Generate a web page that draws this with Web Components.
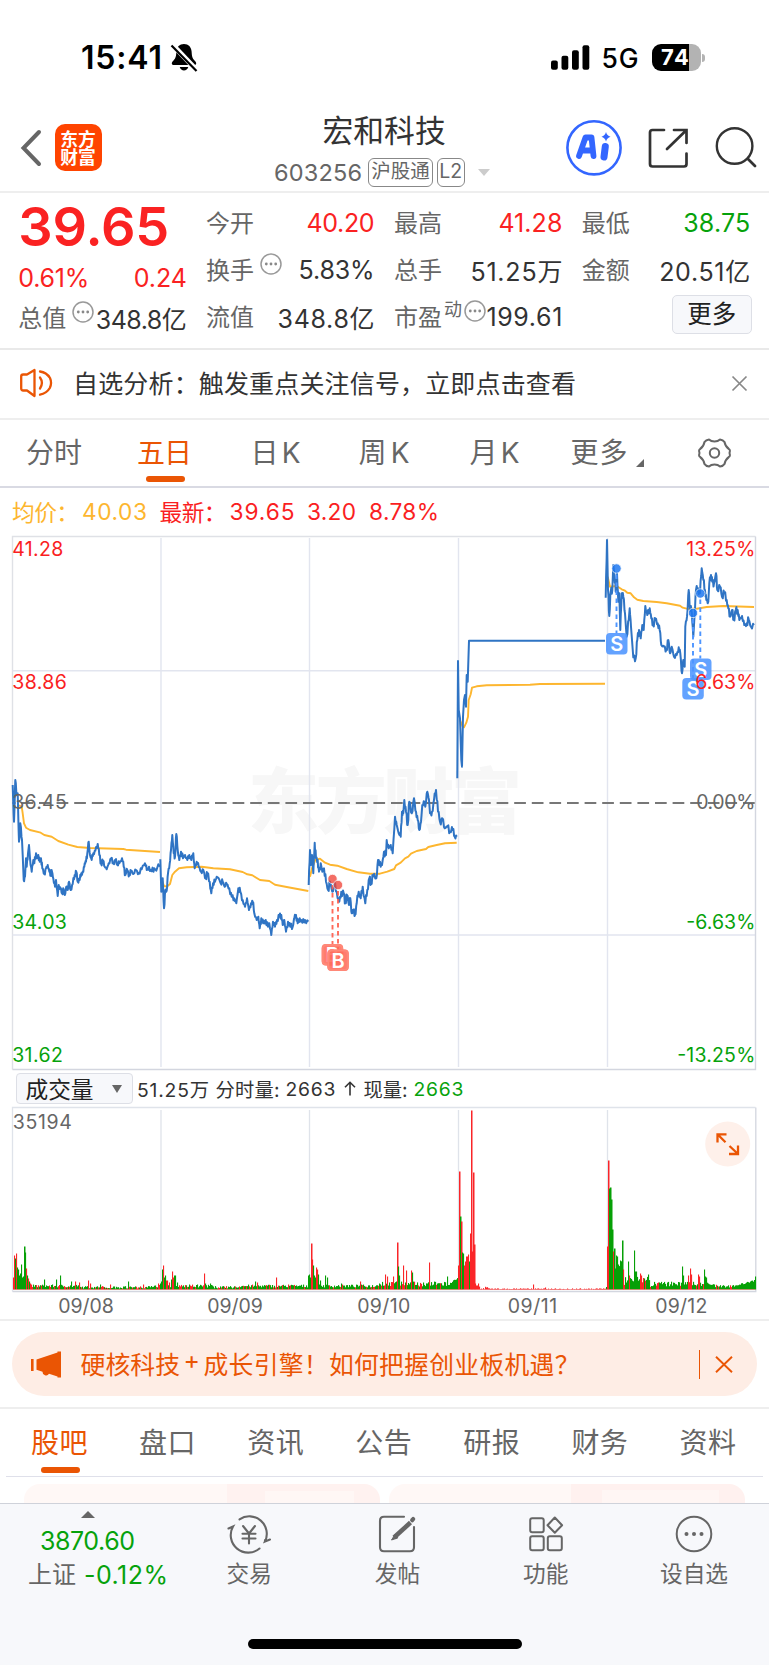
<!DOCTYPE html>
<html lang="zh-CN">
<head>
<meta charset="utf-8">
<title>宏和科技 603256</title>
<style>
html,body{margin:0;padding:0;background:#fff}
body{width:769px;font-family:Inter,"Noto Sans CJK SC",sans-serif;color:#333;overflow-x:hidden}
</style>
</head>
<body>
<stock-app></stock-app>
<script>
const make = (name, css, html) => {
  const t = document.createElement('template');
  t.innerHTML = `<style>:host{display:block;box-sizing:border-box}*{box-sizing:border-box}svg{display:block;overflow:visible}${css}</style>${html}`;
  customElements.define(name, class extends HTMLElement {
    connectedCallback() {
      if (this.shadowRoot) return;
      this.attachShadow({ mode: 'open' }).appendChild(t.content.cloneNode(true));
    }
  });
};

/* ---------- app shell ---------- */
make('stock-app', `:host{width:769px;height:1665px;overflow:hidden;background:#fff}`, `
<status-bar></status-bar>
<nav-header></nav-header>
<quote-panel></quote-panel>
<notice-bar></notice-bar>
<period-tabs></period-tabs>
<chart-legend></chart-legend>
<price-chart></price-chart>
<volume-head></volume-head>
<volume-chart></volume-chart>
<promo-banner></promo-banner>
<section-tabs></section-tabs>
<feed-peek></feed-peek>
<bottom-nav></bottom-nav>`);

make('status-bar', `:host{display:flex;align-items:center;height:103px;padding:12px 64px 0 81px;color:#000}
.l,.r{display:flex;align-items:center}.r{margin-left:auto}
.time{font-size:32px;font-weight:600}
.bell{margin-left:8px}.g{font-size:26.5px;font-weight:500;margin:1px 13px 0 12px}
.bat{width:49px;height:27px;border-radius:9px;background:linear-gradient(90deg,#000 37px,#b3b3b3 37px);color:#fff;font-weight:700;font-size:22px;line-height:27px;padding-left:9.5px}
.nub{width:3px;height:8px;border-radius:0 3px 3px 0;background:#b3b3b3;margin-left:1.5px}`, `
<div class="l"><fit-text class="time" w="81">15:41</fit-text>
<svg class="bell" width="28" height="29" viewBox="0 0 28 29"><path d="M14 1c-4.500 0-7.300 3.200-7.600 7.400-.3 4.600-.6 6.600-2.900 9-1.100 1.200-1.700 2-1.700 3.100 0 .9.700 1.500 1.800 1.500h20.800c1.100 0 1.800-.6 1.800-1.500 0-1.100-.6-1.900-1.700-3.100-2.300-2.400-2.600-4.400-2.900-9C21.300 4.200 18.500 1 14 1ZM9.700 24c.7 2.300 2.300 3.500 4.300 3.500s3.600-1.200 4.300-3.500Z"/><path d="M2.300 1.500 27 27.500" stroke="#fff" stroke-width="5"/><path d="M1.500 2.500 26.500 28" stroke="#000" stroke-width="2.200"/></svg></div>
<div class="r"><svg width="39" height="25" viewBox="0 0 39 25"><rect x="0" y="15.500" width="6.800" height="9.300" rx="2"/><rect x="10.500" y="10.800" width="6.800" height="14" rx="2"/><rect x="21" y="5.300" width="6.800" height="19.500" rx="2"/><rect x="31.500" y=".3" width="6.800" height="24.500" rx="2"/></svg>
<fit-text class="g" w="37">5G</fit-text><div class="bat"><fit-text w="28">74</fit-text></div><div class="nub"></div></div>`);

make('nav-header', `:host{display:grid;grid-template-columns:240px 1fr 240px;height:90px;border-bottom:2px solid #eee}
.l{display:flex;align-items:center;padding-left:20.500px;height:89px}
.logo{margin-left:14px;width:47px;height:47px;border-radius:10px;background:#ff4400;color:#fff;font:700 17.800px/18.500px "Noto Sans CJK SC",sans-serif;text-align:center;padding-top:4.500px}
.c{display:flex;flex-direction:column}
h1{font-weight:400;font-size:30.800px;line-height:36px;margin:9.500px 0 0 82.500px;color:#333}
.sub{display:flex;align-items:center;height:30px;margin-top:9px;padding-left:34px;color:#666;font-size:23.500px}
.tag{height:29px;border:1.500px solid #888;border-radius:6px;line-height:25.500px;font-size:19.500px;display:flex;justify-content:center}
.tri{border:6.500px solid transparent;border-top:7px solid #ccc;border-bottom:0;margin-left:13px}
.r{display:flex;align-items:center;height:90px}`, `
<div class="l"><svg width="20" height="36" viewBox="0 0 20 36"><path d="M18 2 2.500 18 18 34" fill="none" stroke="#666" stroke-width="4" stroke-linecap="round"/></svg><div class="logo">东方<br>财富</div></div>
<div class="c"><h1>宏和科技</h1><div class="sub"><fit-text w="88">603256</fit-text><span class="tag" style="width:65px;margin-left:6px">沪股通</span><span class="tag" style="width:27.500px;margin-left:4px">L2</span><span class="tri"></span></div></div>
<div class="r"><svg width="240" height="90" viewBox="529 103 240 90" fill="none">
<circle cx="594" cy="147.800" r="26.600" stroke="#36f" stroke-width="2.600"/>
<path d="M579 156 585.500 137.500h6l2 18.500M582.300 150.500h10.500" stroke="#36f" stroke-width="5.800" stroke-linejoin="round" stroke-linecap="round"/>
<path d="M605.300 146.500 604 157" stroke="#36f" stroke-width="7" stroke-linecap="round"/><path d="M606 132q1 3.800 4.500 4.800-3.500 1-4.500 4.800-1-3.800-4.500-4.800 3.500-1 4.500-4.800Z" fill="#36f"/>
<path d="M664 130H652.500q-2.500 0-2.500 2.500V164q0 2.500 2.500 2.500H684q2.500 0 2.500-2.500V153.500M674 130h12.500v13M686 130.500 667 149" stroke="#333" stroke-width="2.700" stroke-linecap="round"/>
<circle cx="734.600" cy="146" r="17.800" stroke="#333" stroke-width="2.400"/><path d="m748 159 7 7" stroke="#333" stroke-width="2.800" stroke-linecap="round"/></svg></div>`);

/* ---------- quote ---------- */
make('info-dot', `:host{display:inline-block;margin-bottom:9px}`, `<svg width="22" height="22" viewBox="0 0 22 22"><circle cx="11" cy="11" r="10" fill="none" stroke="#999" stroke-width="1.500"/><g fill="#888"><circle cx="6.300" cy="11" r="1.400"/><circle cx="11" cy="11" r="1.400"/><circle cx="15.700" cy="11" r="1.400"/></g></svg>`);
make('quote-cell', `:host{display:flex;align-items:center;justify-content:space-between;height:47px;font-size:25px;white-space:nowrap}.k{display:flex;align-items:center;font-size:24px;color:#666;padding-bottom:2px}`, `<div class="k"><slot name="k"></slot></div><slot></slot>`);
make('quote-panel', `:host{display:grid;grid-template-columns:repeat(4,168.500px);column-gap:19.300px;height:157px;padding-left:18.300px;border-bottom:2px solid #e9e9e9}
.up{color:#fa2222}.dn{color:#06a20b}.big{font-size:54px;font-weight:600;height:67px;display:flex;align-items:center}
.o{padding-top:6px}info-dot{margin-left:6px}.sup{font-size:18px;margin:0 0 16px 2px}.sup+info-dot{margin-left:2px}
.n{color:#333}.btn{width:80px;height:39px;border:1.500px solid #dddfe6;background:#f7f8fb;border-radius:5px;margin:2px -1.500px 0 auto;font-size:24.500px;line-height:37px;text-align:center;color:#222}`, `
<div><div class="big up"><fit-text w="151">39.65</fit-text></div>
<quote-cell style="height:35px" class="up"><fit-text class="up" slot="k" w="71" style="font-size:25px;padding-top:2px">0.61%</fit-text><fit-text w="53">0.24</fit-text></quote-cell>
<quote-cell style="height:45px" class="n"><span slot="k">总值</span><info-dot slot="k"></info-dot><fit-text w="91">348.8亿</fit-text></quote-cell></div>
<div class="o"><quote-cell><span slot="k">今开</span><fit-text class="up" w="68">40.20</fit-text></quote-cell>
<quote-cell><span slot="k">换手</span><info-dot slot="k"></info-dot><fit-text w="76">5.83%</fit-text></quote-cell>
<quote-cell><span slot="k">流值</span><fit-text w="97">348.8亿</fit-text></quote-cell></div>
<div class="o"><quote-cell><span slot="k">最高</span><fit-text class="up" w="64">41.28</fit-text></quote-cell>
<quote-cell><span slot="k">总手</span><fit-text w="92">51.25万</fit-text></quote-cell>
<quote-cell><span slot="k">市盈</span><span slot="k" class="sup">动</span><info-dot slot="k"></info-dot><fit-text w="76">199.61</fit-text></quote-cell></div>
<div class="o"><quote-cell><span slot="k">最低</span><fit-text class="dn" w="67">38.75</fit-text></quote-cell>
<quote-cell><span slot="k">金额</span><fit-text w="91">20.51亿</fit-text></quote-cell><div class="btn">更多</div></div>`);

make('notice-bar', `:host{display:flex;align-items:center;height:70px;padding:0 21px 2px 20px;border-bottom:2px solid #eee;font-size:25px;color:#333}.t{margin:0 0 3px 20px}.x{margin-left:auto}`, `
<svg width="33" height="28" viewBox="0 0 33 28" fill="none" stroke="#ea5504" stroke-width="2.300" stroke-linejoin="round" stroke-linecap="round"><path d="M1.200 7.500q0-2 2-2H7L14.500 1v26L7 21.500H3.200q-2 0-2-2Z"/><path d="M20 8.500q3.800 5.300 0 11M20 2.500q6.500.8 10 6.500 2.200 5-.2 10-3.300 5.500-9.800 6.700"/></svg>
<fit-text class="t" w="503">自选分析：触发重点关注信号，立即点击查看</fit-text>
<svg class="x" width="17" height="17" viewBox="0 0 17 17"><path d="m1.500 1.500 14 14m0-14-14 14" stroke="#888" stroke-width="1.700"/></svg>`);

make('period-tabs', `:host{display:flex;height:68px;border-bottom:2px solid #d9dae3;font-size:28px;line-height:67px;color:#666;padding-left:26px;white-space:nowrap}
.on{color:#ea5504;display:flex;flex-direction:column;height:66px}.on i{width:39px;height:6px;border-radius:3px;background:#ea5504;margin:-11px 0 0 8.500px}
.tri{width:0;height:0;border-left:8px solid transparent;border-bottom:8px solid #666;margin:39px 54px 0 8px}svg{margin-top:17px}`, `
<fit-text w="56" style="margin-right:55px">分时</fit-text><div class="on" style="margin-right:58.500px"><fit-text w="55">五日</fit-text><i></i></div>
<fit-text w="50" style="margin-right:58px">日K</fit-text><fit-text w="51" style="margin-right:60px">周K</fit-text><fit-text w="50" style="margin-right:51px">月K</fit-text><fit-text w="57">更多</fit-text><span class="tri"></span>
<svg width="33" height="32" viewBox="-16.500 -16 33 32" fill="none" stroke="#666" stroke-width="2"><path d="M-5.500-13.500q2 1.900 5.500 1.900t5.500-1.900q3 .3 4.600 2.600.3 3.700 4.400 7Q16-3.500 15 0q1 3.500-.5 3.900-4.100 3.300-4.400 7-1.600 2.300-4.600 2.600-2-1.900-5.500-1.900t-5.500 1.900q-3-.3-4.600-2.600-.3-3.700-4.400-7-1.500-.4-.5-3.900-1-3.500.5-3.900 4.100-3.300 4.400-7 1.600-2.300 4.600-2.600Z" stroke-linejoin="round"/><circle r="4.700"/></svg>`);

make('chart-legend', `:host{display:flex;align-items:center;height:48px;padding:0 0 1px 12px;font-size:22.700px;color:#fa1e22;white-space:nowrap}.a{color:#fdb62f}`, `
<fit-text class="a" w="67">均价：</fit-text><fit-text class="a" w="65" style="margin-left:3px">40.03</fit-text><fit-text w="67" style="margin-left:12.500px">最新：</fit-text><fit-text w="65" style="margin-left:3px">39.65</fit-text><fit-text w="49" style="margin-left:12.500px">3.20</fit-text><fit-text w="70" style="margin-left:13px">8.78%</fit-text>`);

/* ---------- charts ---------- */
let seed = 7;
const rnd = () => (seed = (seed * 16807) % 2147483647) / 2147483647;
/* [originX, originY, jitter, points]; points are in thirds of a pixel from the origin */
const PRICE = [
[0,530,9,"38,765 42,875 46,750 50,795 53,790 57,935 61,880 66,930 68,975 71,1050 75,1040 78,985 80,1010 84,970 87,945 90,985 95,1025 100,990 103,1000 108,970 111,985 115,975 119,995 123,985 127,1015 133,1032 138,1015 143,1005 148,1025 152,1035 156,1025 160,1045 165,1070 168,1050 173,1098 176,1065 182,1075 186,1090 191,1080 194,1095 199,1070 203,1080 207,1055 212,1080 218,1062 224,1035 229,1025 233,1055 239,1050 244,1030 250,1025 254,1000 258,995 262,970 266,935 270,975 275,990 280,970 286,962 293,942 298,975 303,1000 309,995 314,1010 320,1018 326,1000 333,985 340,1000 346,990 352,1005 358,1000 366,985 371,1010 376,1035 382,1020 388,1035 393,1022 400,1032 408,1020 416,1028 425,1018 435,1000 440,1020 447,1010 455,1024 463,1015 480,1010"],
[0,530,9,"481,988 484,1085 488,1045 492,1135 496,1080 500,1082 504,1030 509,1000 513,960 517,915 521,970 525,980 529,912 533,960 538,990 543,965 549,985 555,975 562,990 568,975 574,990 580,970 584,1015 590,995 596,1010 603,1025 610,1020 617,1045 622,1030 629,1055 634,1090 639,1060 645,1055 650,1040 656,1045 662,1060 668,1055 674,1070 680,1062 688,1075 695,1100 703,1105 709,1120 715,1075 721,1085 728,1110 735,1130 741,1105 747,1140 753,1120 758,1115 763,1150 770,1170 775,1160 779,1195 784,1165 790,1180 797,1170 804,1190 808,1180 814,1215 819,1175 825,1190 831,1170 838,1160 844,1155 848,1185 853,1170 858,1205 864,1175 871,1190 878,1190 883,1165 888,1155 893,1180 899,1165 907,1178 915,1170 925,1175"],
[300,740,12,"26,435 30,330 33,375 36,345 40,400 44,308 48,355 53,360 57,395 62,370 67,395 72,385 78,425 84,450 90,425 97,455 103,430 110,455 118,485 124,455 131,460 136,490 141,465 147,495 151,475 155,520 160,510 165,525 170,490 176,455 182,475 188,440 196,490 202,450 208,415 213,430 219,410 229,415 234,360 240,365 246,375 252,335 258,345 260,300 266,325 272,315 278,340 285,230 290,255 296,280 302,290 306,215 310,220 313,180 318,215 323,255 328,185 335,220 342,175 348,215 353,240 358,270 363,245 367,195 373,185 376,200 382,155 387,180 390,220 396,215 402,180 408,150 414,215 420,245 427,235 434,265 442,260 450,275 458,270 464,290 470,290"],
[440,530,0,"52,745 54,393 56,540 60,565 64,690 66,710 69,560 72,510 75,495 78,530 80,435 83,455 87,332 495,332"],
[440,530,12,"497,203 501,30 504,180 508,258 512,185 517,180 520,105 523,130 527,185 531,130 535,215 538,190 541,300 545,190 550,200 555,250 558,295 560,320 566,270 569,235 573,290 576,330 580,382 587,385 592,330 597,300 602,325 607,285 611,300 616,228 622,255 629,235 634,265 639,285 646,265 653,280 659,300 664,345 672,350 679,360 685,330 690,370 695,350 702,380 710,375 716,352 721,370 726,430 730,390 734,410 736,290 741,260 746,180 750,235 754,240 758,290 760,320 763,270 768,180 774,175 780,190 785,115 790,150 795,180 799,210 805,215 808,160 813,135 817,155 822,160 828,130 832,180 840,170 846,200 853,190 860,210 865,235 870,260 876,240 881,270 887,240 893,240 898,270 906,258 913,285 920,280 926,268 933,290 942,285"]];
const AVG = [
[0,530,0,"54,825 65,830 68,850 72,880 78,893 90,900 122,908 133,915 155,920 175,933 205,944 232,951 270,954 370,957 378,959 480,966"],
[0,530,0,"484,1045 492,1068 500,1070 510,1062 517,1035 525,1025 537,1015 560,1012 605,1010 640,1015 690,1018 728,1026 742,1033 757,1036 780,1050 808,1053 825,1064 860,1071 925,1083"],
[300,740,0,"30,410 36,385 46,360 60,356 75,368 90,374 112,377 140,387 175,397 210,401 240,401 262,395 283,387 288,376 302,368 315,355 325,350 333,341 350,333 378,327 385,321 410,315 435,310 470,308"],
[440,530,0,"60,570 68,590 72,592 79,578 84,560 86,510 92,493 96,473 110,469 140,466 270,464 300,462 495,461"],
[440,530,0,"503,140 510,170 530,168 545,178 555,182 562,188 572,190 582,202 592,209 610,213 650,216 680,220 720,227 728,233 740,236 770,236 800,231 850,228 942,231"]];
const line = ([ox, oy, j, s], color, w) => {
  const p = s.split(' ').map(v => v.split(',').map(Number)), out = [];
  p.forEach((a, i) => {
    out.push(a);
    const b = p[i + 1];
    if (b && j && b[0] - a[0] > 3) {
      const sgn = i % 2 ? 1 : -1;
      out.push([a[0] + (b[0] - a[0]) * .35, a[1] + (b[1] - a[1]) * .35 + sgn * rnd() * j]);
      out.push([a[0] + (b[0] - a[0]) * .7, a[1] + (b[1] - a[1]) * .7 - sgn * rnd() * j]);
    }
  });
  return `<polyline fill="none" stroke="${color}" stroke-width="${w}" stroke-linejoin="round" points="${out.map(([x, y]) => (ox + x / 3).toFixed(1) + ',' + (oy + y / 3).toFixed(1)).join(' ')}"/>`;
};
const lab = (x, x2, y, c, s, fs = 19.500) => `<text x="${x - .8}" y="${y}" fill="${c}" font-size="${fs}" textLength="${x2 - x + 1.600}">${s}</text>`;
const R = '#fa1e22', G = '#06a20b', K = '#666';
const mark = (dx, dy, bx, by, s, c, dot) => `<path d="M${dx} ${dy + 6}V${by}" stroke="${c}" stroke-width="1.900" stroke-dasharray="4.500 3.500"/><circle cx="${dx}" cy="${dy}" r="4.700" fill="${dot}" opacity=".85" stroke="#fff" stroke-width=".8"/><rect x="${bx}" y="${by}" width="21.500" height="21.500" rx="4" fill="${c}" opacity=".88"/><text x="${bx + 10.700}" y="${by + 18}" text-anchor="middle" fill="#fff" font-size="20" font-weight="600">${s}</text>`;
const BUY = (dx, dy, bx, by) => mark(dx, dy, bx, by, 'B', '#ff5c4a', '#f04438') + `<rect x="${bx + 1}" y="${by + 1}" width="19.500" height="19.500" rx="3.500" fill="none" stroke="#ff7c6a" stroke-width="2"/>`;
make('price-chart', `:host{height:535px}`, `<svg width="769" height="535" viewBox="0 536 769 535">
<text x="248" y="827" textLength="274" font-family="Noto Sans CJK SC" font-weight="900" font-size="71" fill="#f7f7f7">东方财富</text>
<g fill="none" stroke="#e2e5ef" stroke-width="1.400"><path d="M12.500 1069.500V536.500H755.500" stroke="#dfe1e6"/><path d="M161 538V1067M309.500 538V1067M458.500 538V1067M607.500 538V1067M12.500 670.800H755.500M12.500 935H755.500"/><path d="M755.500 536.500V1069.500H12.500" stroke="#d3d6df"/></g>
<path d="M12.500 803H755.500" stroke="#777" stroke-width="2" stroke-dasharray="11.700 5.900" stroke-dashoffset="8.700"/>
${AVG.map(a => line(a, '#fdb62f', 1.900)).join('')}${PRICE.map(a => line(a, '#2f74c4', 2)).join('')}
${mark(616.500, 568.500, 606, 633, 'S', '#4d95ff', '#1f78f0')}${mark(693, 613, 682.300, 678, 'S', '#4d95ff', '#1f78f0')}${mark(700.300, 593.500, 690, 658.500, 'S', '#4d95ff', '#1f78f0')}
<g opacity=".9">${BUY(332.500, 879, 321.700, 944)}${BUY(338, 885, 327.300, 949.500)}</g>
${lab(13, 62.500, 555.700, R, '41.28')}${lab(13, 66, 688.700, R, '38.86')}${lab(13, 66, 808.700, K, '36.45')}${lab(13, 66, 928.700, G, '34.03')}${lab(13, 62, 1062.300, G, '31.62')}
${lab(687, 754.500, 555.700, R, '13.25%')}${lab(696, 754.500, 688.700, R, '6.63%')}${lab(697, 754.500, 808.700, K, '0.00%')}${lab(687, 754.500, 928.700, G, '-6.63%')}${lab(678, 754.500, 1062.300, G, '-13.25%')}
</svg>`);

make('volume-head', `:host{display:flex;align-items:center;height:35px;padding:0 0 0 16px;font-size:19.300px;color:#333;white-space:nowrap}
.s{width:117px;height:31px;border:1.500px solid #dddfe6;background:#f7f8fb;border-radius:4px;display:flex;align-items:center;padding-left:8.500px;font-size:22.700px;color:#222}
.s i{border:5px solid transparent;border-top:8px solid #666;border-bottom:0;margin-left:18px}`, `
<div class="s">成交量<i></i></div><fit-text w="72" style="margin-left:4px">51.25万</fit-text><fit-text w="64" style="margin-left:6.500px">分时量:</fit-text><fit-text w="50" style="margin-left:6px">2663</fit-text>
<svg width="12" height="15" viewBox="0 0 12 15" style="margin-left:8.500px"><path d="M6 14.500V1.500M1 6.300l5-5 5 5" fill="none" stroke="#333" stroke-width="1.600"/></svg>
<fit-text w="44" style="margin-left:7.500px">现量:</fit-text><fit-text w="50" style="margin-left:6px;color:#06a20b">2663</fit-text>`);

const bars = () => {
  const h = {}, set = s => s.split(' ').forEach(v => { const m = v.match(/(\d+):(\d+)([rg])/); h[m[1]] = [+m[2], m[3]]; });
  for (let x = 13; x < 756; x++) {
    let b = 2 + rnd() * 3, c = rnd() < .25 ? 'r' : 'g';
    if (x > 476 && x < 606) { b = x < 490 ? rnd() * 3 : rnd() * 1.200; c = 'r'; }
    if ((x > 78 && x < 150) || (x > 212 && x < 240)) b = 1 + rnd() * 2.500;
    if (x > 376 && x < 456) b = 3 + rnd() * 5;
    if (x > 624 && x < 650) b = 7 + rnd() * 7;
    if (x > 650 && x < 715) b = 3 + rnd() * 5;
    if (x > 612 && x < 624) b = 20 + rnd() * 12;
    if (x > 612 && rnd() < .4) c = 'g';
    if (x > 734) { b = 3 + (x - 734) * .25 + rnd() * 1.500; c = 'g'; }
    if (x > 447 && x < 458) { b = 3 + (x - 447) * .7 + rnd() * 2; c = 'g'; }
    h[x] = [b, c];
  }
  set('13:12r 14:34r 15:31g 16:36r 17:22g 18:20g 19:14g 20:16g 21:25g 22:12g 23:13g 24:43g 25:37g 26:21r 27:14g 28:11r 29:8g 30:6r 44:10g 56:10g 60:14g 71:8g 75:8r 79:7r 88:9r 90:6r 100:5g 110:5r 128:8g 143:5r 155:4g 158:6r 160:6g 161:8g 162:20g 163:24r 164:12g 165:14g 166:9r 167:9r 169:7r 171:10g 172:18r 173:12r 174:14g 175:14g 177:7g 204:16r 205:6g 210:6g 255:8g 257:7r 276:12r 288:5r 308:14g 309:15g 310:12g 311:46r 312:30r 313:24g 314:14g 315:12g 316:22r 317:20r 318:15g 320:9g 325:14g 327:12g 341:6g 360:8r 385:15r 387:13r 393:13r 396:8g 397:47r 398:23g 399:14g 403:24r 406:19r 411:19r 412:17g 429:27r 447:13g 458:24r 459:118r 460:73g 461:68r 462:37g 463:36g 464:24r 465:28r 466:33r 467:33r 468:35r 469:28g 470:56r 471:179r 472:38r 473:117r 474:45r 475:6r 476:4r 477:4r 478:6r 533:5r 545:2r 607:43r 608:129r 609:101g 610:102g 611:90g 612:60g 613:38r 614:41g 616:34g 617:33g 618:25g 620:29g 622:49g 623:20r 628:28g 629:14r 634:39g 635:18g 636:18g 640:16r 648:15g 682:23g 683:14g 688:14r 690:21r 691:15r 698:15r 699:13r 704:20g 705:13g 706:12g 755:13g');
  return Object.entries(h).map(([x, [v, c]]) => `<rect x="${x}" y="${(1289.500 - v).toFixed(1)}" width="${v > 40 ? 1.500 : 1.100}" height="${v.toFixed(1)}" fill="${c == 'r' ? '#fa2528' : '#06a006'}"/>`).join('');
};
make('volume-chart', `:host{height:215px;border-bottom:2px solid #eee}`, `<svg width="769" height="213" viewBox="0 1106 769 213">
<g fill="none" stroke="#dfe3ea" stroke-width="1.300"><path d="M12.500 1291.500V1107.500H755.500M161 1110V1290M309.500 1110V1290M458.500 1110V1290M607.500 1110V1290"/><path d="M755.800 1107.500V1291.500H12.500" stroke="#d3d6df"/></g>${bars()}<path d="M13 1289.500H755.500" stroke="#e66" stroke-width=".6"/>
${lab(13.500, 71, 1129, K, '35194')}
${lab(59, 113, 1313, K, '09/08')}${lab(208, 262, 1313, K, '09/09')}${lab(358, 409.500, 1313, K, '09/10')}${lab(508.500, 556.500, 1313, K, '09/11')}${lab(656, 706.500, 1313, K, '09/12')}
<circle cx="727.700" cy="1144" r="22.500" fill="#fef0ea"/><path d="M717.500 1142.500V1134.300H726.500M718 1134.800l7.500 7.500M738 1145.500v8.500h-9M737.500 1153.500l-8-7.500" fill="none" stroke="#ea5504" stroke-width="2.300"/></svg>`);

/* ---------- banner and lower tabs ---------- */
make('promo-banner', `:host{height:88px;padding:11px 12px 0;border-bottom:2px solid #eee}
.b{height:64px;border-radius:32px;background:#feede5;display:flex;align-items:center;padding:0 24px 0 19px;font-size:24.800px;color:#ea5504}
.t{margin-left:18.500px;display:flex;padding-bottom:2px}.t span{width:23.500px;text-align:center}.v{width:1.500px;height:29px;background:#ea5504;margin:0 15px 0 auto}`, `<div class="b">
<svg width="31" height="27" viewBox="0 0 31 27" fill="#ea5504"><path d="M0 8h2.600v12H0ZM5.500 8.500 26.500 1.500V.5H30v26h-3.500v-1L18 22.800q-1.500 2.400-4 1.500-2.600-.8-2.500-3.600l-6-2Z"/></svg>
<div class="t"><fit-text w="99.500">硬核科技</fit-text><span>+</span><fit-text w="376">成长引擎！如何把握创业板机遇？</fit-text></div><i class="v"></i>
<svg width="18" height="17" viewBox="0 0 18 17"><path d="m1 .8 16 15.400M17 .8 1 16.200" stroke="#ea5504" stroke-width="1.900"/></svg></div>`);

make('section-tabs', `:host{height:68px;margin:0 6px;padding:0 27px 0 25px;border-bottom:1.500px solid #dfe0ea;font-size:28px;line-height:68px;color:#666;display:flex;justify-content:space-between;white-space:nowrap}
.on{color:#ea5504;display:flex;flex-direction:column}.on i{width:39px;height:6px;border-radius:3px;background:#ea5504;margin:-10px 0 0 9.500px}`, `
<div class="on"><fit-text w="56.500">股吧</fit-text><i></i></div><fit-text w="56.500">盘口</fit-text><fit-text w="56.500">资讯</fit-text><fit-text w="56.500">公告</fit-text><fit-text w="56.500">研报</fit-text><fit-text w="56.500">财务</fit-text><fit-text w="56.500">资料</fit-text>`);

make('feed-peek', `:host{display:grid;grid-template-columns:356px 356px;gap:9px;height:26px;padding:7px 24px 0;overflow:hidden}
div{border-radius:16px 16px 0 0;height:19px}.a{background:linear-gradient(90deg,transparent 241px,#fff7f5 241px 330px,transparent 330px) 0 7px/100% 100% no-repeat,linear-gradient(90deg,#fff8f6 203px,#fff2f0 203px)}
.b{background:linear-gradient(90deg,transparent 213px,#fff6f4 213px 330px,transparent 330px) 0 6px/100% 100% no-repeat,linear-gradient(90deg,#fff8f6 182px,#fff1ef 182px)}`, `<div class="a"></div><div class="b"></div>`);

make('nav-item', `:host{display:flex;flex-direction:column;align-items:center;font-size:22.700px;line-height:28px;color:#666;padding-top:10px}::slotted(svg){display:block;overflow:visible;margin-bottom:6px}`, `<slot name="i"></slot><slot></slot>`);
make('bottom-nav', `:host{display:grid;grid-template-columns:175px repeat(4,148.300px);grid-template-rows:134px 1fr;height:162px;background:#f7f8fb;border-top:1.500px solid #cfd2da}
.idx{display:flex;flex-direction:column;align-items:center;padding-top:7px;color:#06a20b;font-size:25px;line-height:34px}
.idx i{border:7px solid transparent;border-bottom:7px solid #666;border-top:0;margin-bottom:6px}.row{display:flex;gap:8px;align-items:center;padding-left:21px}.row b{font-weight:400;color:#666;font-size:24px}
.home{grid-column:1/-1;justify-self:start;width:274px;height:10px;border-radius:5px;background:#000;margin:1px 0 0 248px}`, `
<div class="idx"><i></i><fit-text w="95">3870.60</fit-text><div class="row"><b>上证</b><fit-text w="84">-0.12%</fit-text></div></div>
<nav-item><svg slot="i" width="40" height="40" viewBox="-20 -20 40 40" fill="none" stroke="#666" stroke-width="2.100" stroke-linecap="round"><path d="M-9.500-14.700A17.500 17.500 0 0 1 16 7.500L21 5.500M16 7.500V6M10.500 14.500A17.500 17.500 0 0 1-16-7.500L-20.500-5.500"/><path d="m-6-8 6 7.500L6-8M0-.5V9.500M-6.500-.3h13M-6.500 4.500h13"/></svg>交易</nav-item>
<nav-item><svg slot="i" width="40" height="40" viewBox="-20 -20 40 40" fill="none" stroke="#666" stroke-width="2.100" stroke-linecap="round"><path d="M7-17.300H-13q-4 0-4 4v26.600q0 4 4 4h26q4 0 4-4V-7"/><path d="M13.500-11.500-3 3.500" stroke-width="4.500" stroke-linecap="butt"/><path d="M-2 .5-5.500 6 .5 4Z" fill="#666" stroke-width="1"/><path d="m15.200-13.800 1-1.200" stroke-width="4.200"/></svg>发帖</nav-item>
<nav-item><svg slot="i" width="40" height="40" viewBox="-20 -20 40 40" fill="none" stroke="#666" stroke-width="2" stroke-linejoin="round"><rect x="-15.800" y="-15.800" width="13.500" height="14" rx="2"/><rect x="-15.800" y="2.200" width="13.500" height="14" rx="2"/><rect x="1.800" y="2.200" width="14" height="14" rx="2"/><path d="m8.800-16.500 7.300 7.700-7.300 7.500L1.500-8.800Z"/></svg>功能</nav-item>
<nav-item><svg slot="i" width="40" height="40" viewBox="-20 -20 40 40" fill="none" stroke="#666" stroke-width="2"><circle r="17.300"/><g fill="#666" stroke="none"><circle cx="-7.500" r="2"/><circle r="2"/><circle cx="7.500" r="2"/></g></svg>设自选</nav-item>
<div class="home"></div>`);

/* Spreads its text over the width given in the w attribute. */
customElements.define('fit-text', class extends HTMLElement {
  connectedCallback() {
    if (this.shadowRoot) return;
    this.attachShadow({ mode: 'open' }).innerHTML = '<style>:host{display:inline-block;white-space:nowrap;flex:none}</style><span><slot></slot></span>';
    const w = +this.getAttribute('w'), s = this.shadowRoot.querySelector('span');
    const n = this.textContent.length, nat = s.getBoundingClientRect().width;
    this.style.width = w + 'px';
    s.style.letterSpacing = ((w - nat) / Math.max(1, n - 1)).toFixed(3) + 'px';
  }
});
</script>
</body>
</html>
